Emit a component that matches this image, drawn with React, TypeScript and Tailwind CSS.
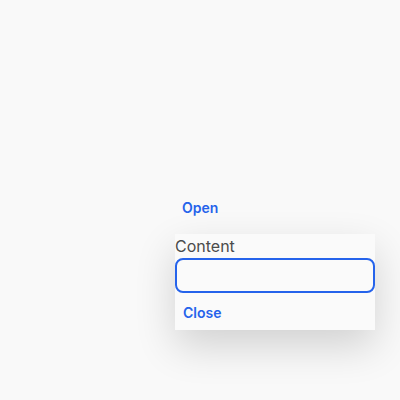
export default function App() {
  return (
    <div className="h-screen w-full bg-[#f9f9f9] pl-[175px] pt-[194px] font-['Inter',sans-serif]">
      <button className="px-[7px] py-1 text-sm font-semibold leading-5 text-[#2563eb]">
        Open
      </button>
      <div className="mt-3 flex w-[200px] flex-col bg-[#fafafa] shadow-[0_16px_40px_rgba(0,0,0,0.16)]">
        <label className="text-base leading-6 text-[#4b4b4b]">Content</label>
        <input className="h-[35px] w-full rounded-lg border-2 border-[#2563eb] bg-transparent px-2 outline-none" />
        <button className="self-start px-2 pb-[7px] pt-[10px] text-sm font-semibold leading-5 text-[#2563eb]">
          Close
        </button>
      </div>
    </div>
  );
}
